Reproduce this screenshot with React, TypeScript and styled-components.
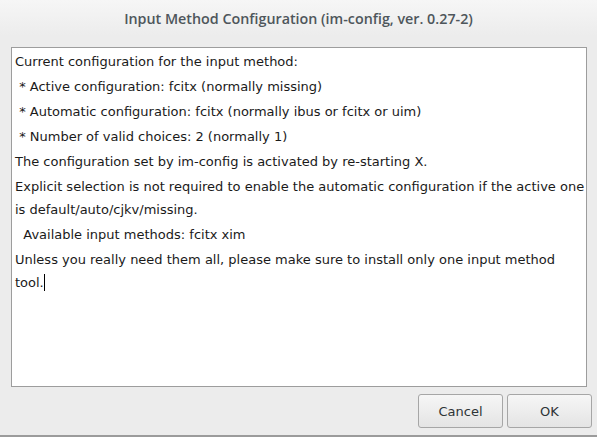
import React from "react";
import styled, { createGlobalStyle } from "styled-components";

const Global = createGlobalStyle`
  html, body { margin: 0; padding: 0; }
  body { background: #ececec; }
`;

const Window = styled.div`
  width: 597px;
  height: 437px;
  box-sizing: border-box;
  display: flex;
  flex-direction: column;
  background: #ececec;
  border-bottom: 2px solid #9b9b9b;
  font-family: "DejaVu Sans", sans-serif;
`;

const TitleBar = styled.div`
  height: 36px;
  flex: none;
  display: flex;
  align-items: center;
  justify-content: center;
  background: linear-gradient(#f6f6f6, #ececec);
  font-family: "Open Sans", "DejaVu Sans", sans-serif;
  font-weight: 600;
  font-size: 14.3px;
  color: #4e565b;
`;

const Body = styled.div`
  flex: 1;
  display: flex;
  flex-direction: column;
  padding: 11px 5px 0 11px;
  min-height: 0;
`;

const TextBox = styled.div`
  height: 340px;
  box-sizing: border-box;
  flex: none;
  margin-right: 5px;
  background: #fff;
  border: 1px solid #9d9d9d;
  padding: 2px 2px 0 3px;
  color: #1a1a1a;
  font-size: 13px;
  line-height: 23px;
  white-space: nowrap;
  overflow: hidden;
`;

const Para = styled.p`
  margin: 0 0 2px 0;
`;

const Caret = styled.span`
  display: inline-block;
  width: 1px;
  height: 17px;
  background: #000;
  vertical-align: -4px;
`;

const ButtonRow = styled.div`
  display: flex;
  justify-content: flex-end;
  gap: 4px;
  padding-top: 7px;
`;

const Button = styled.button`
  width: 85px;
  height: 34px;
  border: 1px solid #a6a6a6;
  border-radius: 3px;
  background: linear-gradient(#f6f6f6, #e4e4e4);
  font-family: "DejaVu Sans", sans-serif;
  font-size: 13px;
  color: #2e3436;
  padding: 0;
`;

const lines: string[] = [
  "Current configuration for the input method:",
  "\u00a0* Active configuration: fcitx (normally missing)",
  "\u00a0* Automatic configuration: fcitx (normally ibus or fcitx or uim)",
  "\u00a0* Number of valid choices: 2 (normally 1)",
  "The configuration set by im-config is activated by re-starting X.",
];

export default function App() {
  return (
    <>
      <Global />
      <Window>
        <TitleBar>Input Method Configuration (im-config, ver. 0.27-2)</TitleBar>
        <Body>
          <TextBox>
            {lines.map((l, i) => (
              <Para key={i}>{l}</Para>
            ))}
            <Para>
              Explicit selection is not required to enable the automatic configuration if the active one
              <br />
              is default/auto/cjkv/missing.
            </Para>
            <Para>{"\u00a0\u00a0Available input methods: fcitx xim"}</Para>
            <Para>
              Unless you really need them all, please make sure to install only one input method
              <br />
              tool.
              <Caret />
            </Para>
          </TextBox>
          <ButtonRow>
            <Button>Cancel</Button>
            <Button>OK</Button>
          </ButtonRow>
        </Body>
      </Window>
    </>
  );
}
